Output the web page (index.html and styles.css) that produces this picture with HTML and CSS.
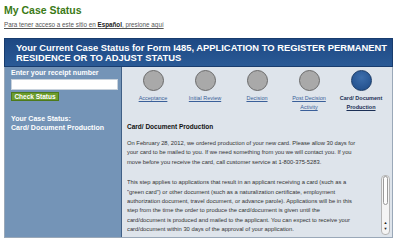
FILE: index.html
```html
<!DOCTYPE html>
<html lang="en">
<head>
    <meta charset="UTF-8">
    <title>My Case Status</title>
    <link rel="stylesheet" href="styles.css">
</head>
<body>
    <div class="page">
        <h1 class="title">My Case Status</h1>
        <a class="lang-link" href="#">Para tener acceso a este sitio en <b>Español</b>, presione aquí</a>

        <div class="status-head">
            Your Current Case Status for Form I485, APPLICATION TO REGISTER PERMANENT<br>
            RESIDENCE OR TO ADJUST STATUS
        </div>

        <div class="status-body">
            <div class="side">
                <label class="side-label">Enter your receipt number</label>
                <input class="receipt" type="text">
                <button class="check">Check Status</button>
                <div class="side-status">
                    Your Case Status:<br>
                    Card/ Document Production
                </div>
            </div>

            <div class="main">
                <div class="steps">
                    <div class="step">
                        <div class="dot"></div>
                        <a href="#">Acceptance</a>
                    </div>
                    <div class="step">
                        <div class="dot"></div>
                        <a href="#">Initial Review</a>
                    </div>
                    <div class="step">
                        <div class="dot"></div>
                        <a href="#">Decision</a>
                    </div>
                    <div class="step">
                        <div class="dot"></div>
                        <a href="#">Post Decision<br>Activity</a>
                    </div>
                    <div class="step current">
                        <div class="dot"></div>
                        <a href="#"><span>Card/ Document</span><br><u>Production</u></a>
                    </div>
                </div>

                <h3 class="stage">Card/ Document Production</h3>
                <p class="text">
                    On February 28, 2012, we ordered production of your new card. Please allow 30 days for<br>
                    your card to be mailed to you. If we need something from you we will contact you. If you<br>
                    move before you receive the card, call customer service at 1-800-375-5283.
                </p>

                <div class="scroll-box">
                    <p class="text">
                        This step applies to applications that result in an applicant receiving a card (such as a<br>
                        "green card") or other document (such as a naturalization certificate, employment<br>
                        authorization document, travel document, or advance parole). Applications will be in this<br>
                        step from the time the order to produce the card/document is given until the<br>
                        card/document is produced and mailed to the applicant. You can expect to receive your<br>
                        card/document within 30 days of the approval of your application.
                    </p>
                    <div class="scrollbar">
                        <div class="thumb"></div>
                        <div class="arrows">
                            <span>&#9650;</span>
                            <span>&#9660;</span>
                        </div>
                    </div>
                </div>
            </div>
        </div>
    </div>
</body>
</html>
```

FILE: styles.css
```css
* {
    margin: 0;
    padding: 0;
    box-sizing: border-box;
}

body {
    font-family: "Liberation Sans", Arial, sans-serif;
    background: #fff;
}

.page {
    width: 389px;
    margin-left: 4px;
    padding-top: 4px;
}

.title {
    font-size: 10.5px;
    line-height: 13px;
    color: #3b7a16;
    font-weight: bold;
}

.lang-link {
    display: block;
    margin-top: 4px;
    font-size: 6.3px;
    line-height: 8px;
    color: #555;
}

.lang-link b {
    color: #222;
}

.status-head {
    margin-top: 9px;
    height: 29px;
    padding: 4px 0 0 11px;
    background: linear-gradient(#1e4883, #2a5a96);
    border: 1px solid #183c6e;
    color: #fff;
    font-weight: bold;
    font-size: 9.4px;
    line-height: 10px;
    white-space: nowrap;
}

.status-body {
    display: flex;
    height: 171px;
    border: 1px solid #9aa8b8;
    border-top: none;
}

.side {
    width: 117px;
    background: #7494b7;
    border-right: 1px solid #3f5f86;
    padding: 1px 0 0 6px;
    color: #fff;
    font-weight: bold;
    font-size: 7px;
    line-height: 9px;
}

.side-label {
    display: block;
}

.receipt {
    display: block;
    margin-top: 2px;
    width: 107px;
    height: 11px;
    border: 1px solid #c8d2dc;
    background: #fff;
}

.check {
    display: block;
    margin-top: 2px;
    width: 48px;
    height: 9px;
    background: #6c9c2e;
    border: 1px solid #4d7a1c;
    color: #fff;
    font-family: "Liberation Sans", Arial, sans-serif;
    font-weight: bold;
    font-size: 6.5px;
    line-height: 7px;
}

.side-status {
    margin-top: 13px;
}

.main {
    flex: 1;
    background: #dee4eb;
    padding: 3px 2px 0 5px;
    display: flex;
    flex-direction: column;
}

.steps {
    display: flex;
}

.step {
    width: 52px;
    display: flex;
    flex-direction: column;
    align-items: center;
    text-align: center;
}

.dot {
    width: 21px;
    height: 21px;
    border-radius: 50%;
    background: #a9a9a9;
    border: 1px solid #6a6a6a;
}

.step a {
    margin-top: 3px;
    font-size: 5.5px;
    line-height: 9px;
    color: #3a5f99;
}

.current .dot {
    background: radial-gradient(circle at 50% 35%, #3d6eac, #1d4a86);
    border-color: #1a3a66;
}

.current a {
    color: #1b2f55;
    font-weight: bold;
    text-decoration: none;
}

.current u {
    text-decoration: underline;
}

.stage {
    margin-top: 10px;
    font-size: 6.5px;
    line-height: 9px;
    color: #111;
}

.text {
    margin-top: 8px;
    font-size: 5.8px;
    line-height: 9.4px;
    color: #333;
    white-space: nowrap;
}

.scroll-box {
    display: flex;
    justify-content: space-between;
    margin-top: 8px;
    height: 60px;
    overflow: hidden;
}

.scroll-box .text {
    margin-top: 3px;
}

.scrollbar {
    width: 9px;
    display: flex;
    flex-direction: column;
    background: #f4f4f4;
    border: 1px solid #b5b5b5;
    border-radius: 4px;
}

.thumb {
    height: 29px;
    margin: 0 1px;
    background: #fdfdfd;
    border: 1px solid #9a9a9a;
    border-radius: 4px;
}

.arrows {
    margin-top: auto;
    display: flex;
    flex-direction: column;
    align-items: center;
    font-size: 4px;
    line-height: 6px;
    color: #222;
    padding-bottom: 2px;
}
```
